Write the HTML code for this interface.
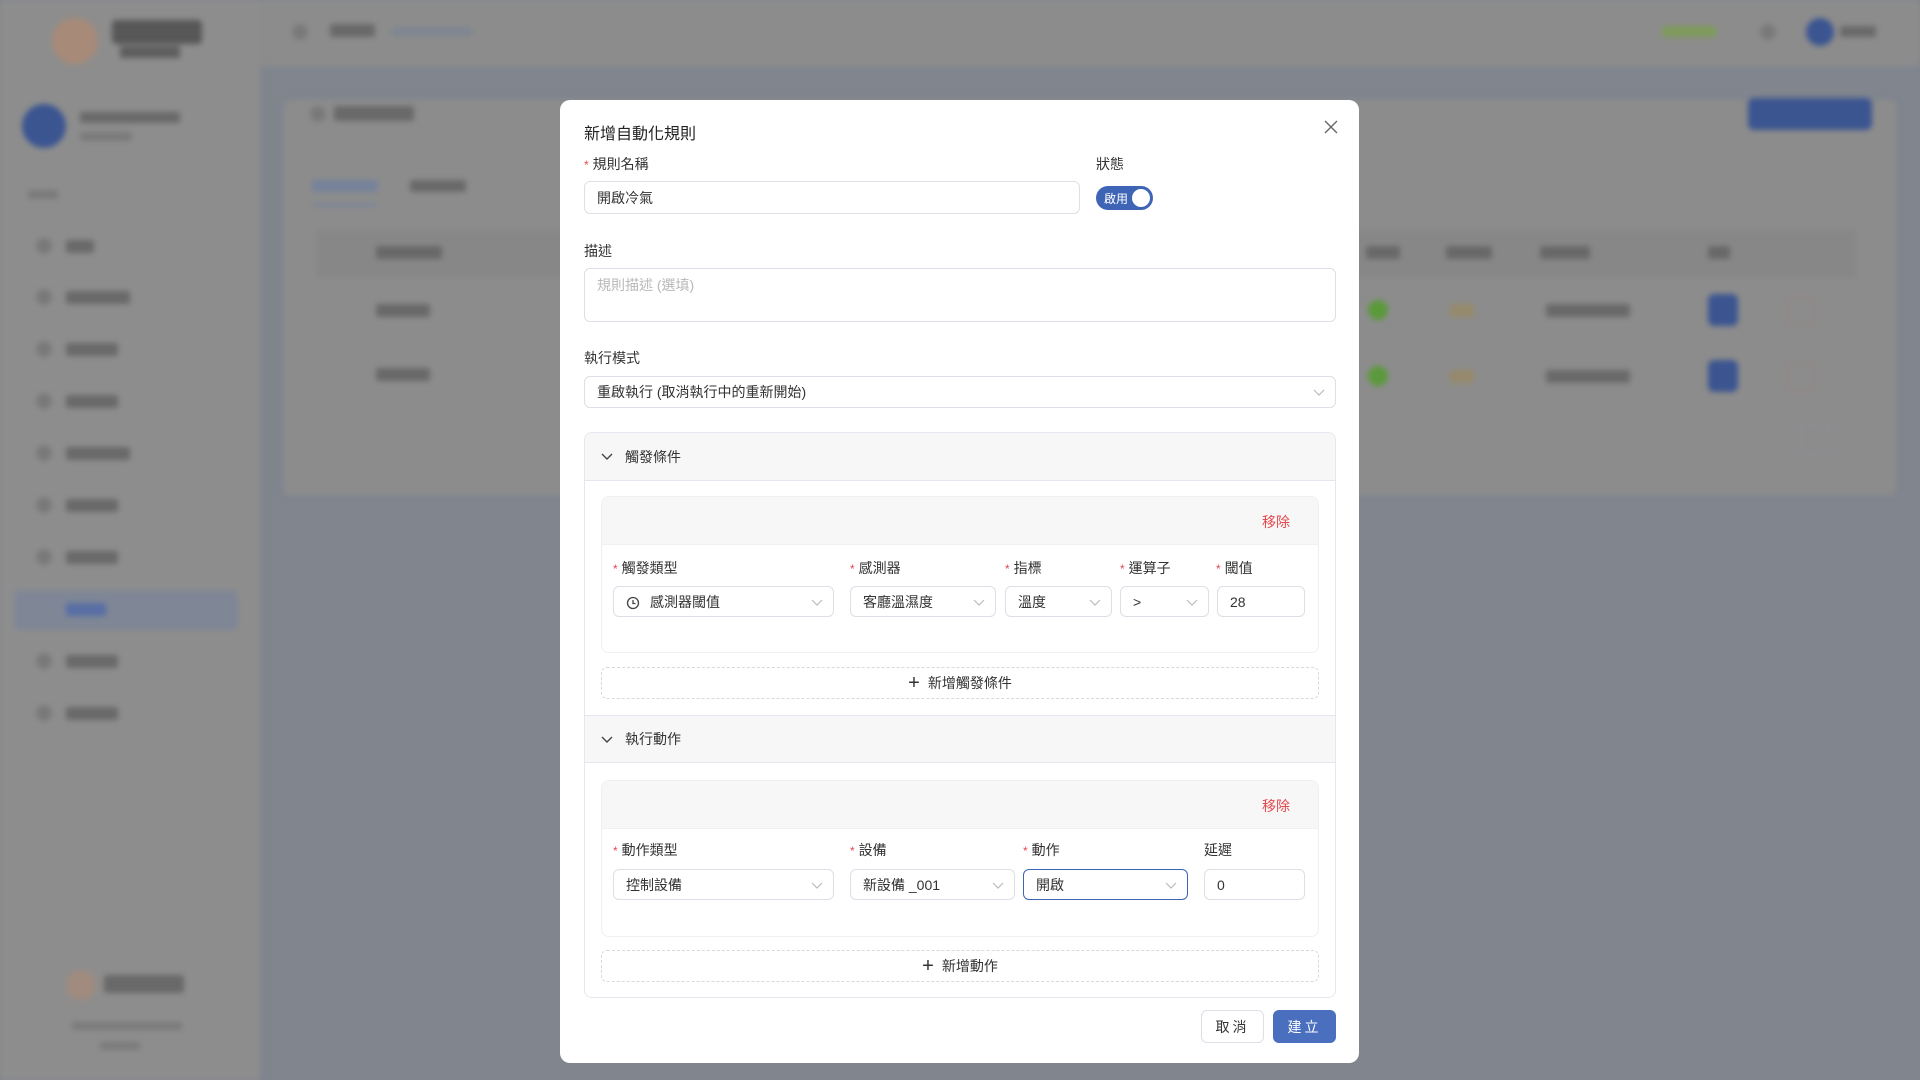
<!DOCTYPE html>
<html><head><meta charset="utf-8"><style>
*{box-sizing:border-box;margin:0;padding:0}
body{width:1920px;height:1080px;overflow:hidden;position:relative;font-family:"Liberation Sans","Noto Sans CJK TC",sans-serif;background:#80858e;color:#333}
.bg{position:absolute;inset:0;filter:blur(3px)}
.a{position:absolute}
.t{position:absolute;height:13px;background:#5e5e5e;opacity:.75;border-radius:2px}
.ic{position:absolute;width:16px;height:16px;border-radius:50%;background:#707070;opacity:.7}
.m{position:absolute;left:560px;top:100px;width:799px;height:963px;background:#fff;border-radius:10px}
.lbl{position:absolute;font-size:14px;color:#333}
.lbl i{color:#e5484d;font-style:normal;margin-right:4px;font-size:12px}
.in{position:absolute;border:1px solid #dcdfe6;border-radius:6px;background:#fff;font-size:14px;color:#333;display:flex;align-items:center;padding-left:12px}
.chev{position:absolute;right:10px;top:50%;margin-top:-5px;width:12px;height:10px}
.panel{position:absolute;left:584px;width:752px;border:1px solid #e4e7ed;border-radius:8px;background:#fff}
.ph{position:absolute;left:0;right:0;height:48px;background:#f7f7f7;border-bottom:1px solid #e4e7ed;font-size:14px;display:flex;align-items:center;padding-left:40px}
.card{position:absolute;left:601px;width:718px;border:1px solid #eef0f3;border-radius:8px;background:#fff;overflow:hidden}
.card .hd{height:48px;background:#f7f7f8;border-bottom:1px solid #eef0f3;position:relative}
.rm{position:absolute;right:28px;top:15px;color:#e5484d;font-size:14px}
.add{position:absolute;left:601px;width:718px;height:32px;border:1px dashed #d6d9de;border-radius:6px;display:flex;align-items:center;justify-content:center;font-size:14px;color:#333}
</style></head><body>
<div class="bg">
 <div class="a" style="left:0;top:0;width:260px;height:1080px;background:#8d8d8d"></div>
 <div class="a" style="left:260px;top:0;width:1660px;height:66px;background:#8c8c8c"></div>
 <div class="a" style="left:52px;top:18px;width:46px;height:46px;border-radius:50%;background:#a88a78"></div>
 <div class="a" style="left:112px;top:20px;width:90px;height:24px;background:#404040;border-radius:4px;opacity:.7"></div>
 <div class="a" style="left:120px;top:46px;width:60px;height:12px;background:#404040;opacity:.6"></div>
 <div class="a" style="left:22px;top:104px;width:44px;height:44px;border-radius:50%;background:#3b5591"></div>
 <div class="t" style="left:80px;top:112px;width:100px;height:11px"></div>
 <div class="t" style="left:80px;top:132px;width:52px;height:9px;opacity:.4"></div>
 <div class="t" style="left:28px;top:190px;width:30px;height:9px;opacity:.4"></div>
 <div class="a" style="left:14px;top:590px;width:224px;height:40px;background:#7f8696;border-radius:6px"></div>
 <div class="ic" style="left:36px;top:238px"></div><div class="t" style="left:66px;top:240px;width:28px"></div>
 <div class="ic" style="left:36px;top:289px"></div><div class="t" style="left:66px;top:291px;width:64px"></div>
 <div class="ic" style="left:36px;top:341px"></div><div class="t" style="left:66px;top:343px;width:52px"></div>
 <div class="ic" style="left:36px;top:393px"></div><div class="t" style="left:66px;top:395px;width:52px"></div>
 <div class="ic" style="left:36px;top:445px"></div><div class="t" style="left:66px;top:447px;width:64px"></div>
 <div class="ic" style="left:36px;top:497px"></div><div class="t" style="left:66px;top:499px;width:52px"></div>
 <div class="ic" style="left:36px;top:549px"></div><div class="t" style="left:66px;top:551px;width:52px"></div>
 <div class="t" style="left:66px;top:603px;width:40px;background:#4a66a8"></div>
 <div class="ic" style="left:36px;top:653px"></div><div class="t" style="left:66px;top:655px;width:52px"></div>
 <div class="ic" style="left:36px;top:705px"></div><div class="t" style="left:66px;top:707px;width:52px"></div>
 <div class="a" style="left:66px;top:970px;width:30px;height:30px;border-radius:50%;background:#a88a78;opacity:.7"></div>
 <div class="t" style="left:104px;top:975px;width:80px;height:18px"></div>
 <div class="t" style="left:72px;top:1022px;width:110px;height:8px;opacity:.4"></div>
 <div class="t" style="left:100px;top:1042px;width:40px;height:8px;opacity:.4"></div>
 <div class="ic" style="left:292px;top:24px"></div>
 <div class="t" style="left:330px;top:24px;width:45px"></div>
 <div class="t" style="left:392px;top:27px;width:80px;height:9px;background:#7a8494"></div>
 <div class="t" style="left:1662px;top:26px;width:54px;height:11px;background:#7aa04a"></div>
 <div class="ic" style="left:1760px;top:24px"></div>
 <div class="a" style="left:1806px;top:18px;width:28px;height:28px;border-radius:50%;background:#3b5591"></div>
 <div class="t" style="left:1840px;top:26px;width:36px;height:11px"></div>
 <div class="a" style="left:284px;top:100px;width:1612px;height:395px;background:#8c8c8c;border-radius:6px"></div>
 <div class="ic" style="left:310px;top:106px"></div><div class="t" style="left:334px;top:106px;width:80px;height:15px"></div>
 <div class="t" style="left:312px;top:180px;width:66px;height:12px;background:#6f7fa0"></div>
 <div class="a" style="left:312px;top:204px;width:66px;height:2px;background:#6f7fa0"></div>
 <div class="t" style="left:410px;top:180px;width:56px;height:12px"></div>
 <div class="a" style="left:316px;top:230px;width:1540px;height:48px;background:#878787"></div>
 <div class="t" style="left:376px;top:246px;width:66px;height:13px"></div>
 <div class="t" style="left:1366px;top:246px;width:34px"></div>
 <div class="t" style="left:1446px;top:246px;width:46px"></div>
 <div class="t" style="left:1540px;top:246px;width:50px"></div>
 <div class="t" style="left:1708px;top:246px;width:22px"></div>
 <div class="t" style="left:376px;top:304px;width:54px"></div>
 <div class="t" style="left:376px;top:368px;width:54px"></div>
 <div class="a" style="left:1368px;top:300px;width:20px;height:20px;border-radius:50%;background:#5a9a3a"></div>
 <div class="a" style="left:1368px;top:366px;width:20px;height:20px;border-radius:50%;background:#5a9a3a"></div>
 <div class="t" style="left:1450px;top:304px;width:24px;background:#9a8a60"></div>
 <div class="t" style="left:1450px;top:370px;width:24px;background:#9a8a60"></div>
 <div class="t" style="left:1546px;top:304px;width:84px"></div>
 <div class="t" style="left:1546px;top:370px;width:84px"></div>
 <div class="a" style="left:1708px;top:294px;width:30px;height:32px;border-radius:6px;background:#3b5591"></div>
 <div class="a" style="left:1708px;top:360px;width:30px;height:32px;border-radius:6px;background:#3b5591"></div>
 <div class="a" style="left:1788px;top:296px;width:28px;height:30px;border-radius:6px;border:1px solid #a08080"></div>
 <div class="a" style="left:1788px;top:362px;width:28px;height:30px;border-radius:6px;border:1px solid #a08080"></div>
 <div class="a" style="left:1800px;top:424px;width:30px;height:32px;border-radius:6px;border:1px solid #8a90a0"></div>
 <div class="a" style="left:1748px;top:98px;width:124px;height:32px;background:#3b5591;border-radius:6px"></div>
</div>

<div class="m"></div>
<div class="a" style="left:584px;top:120px;font-size:16px;color:#222">新增自動化規則</div>
<svg class="a" style="left:1324px;top:120px" width="14" height="14" viewBox="0 0 14 14"><path d="M1 1L13 13M13 1L1 13" stroke="#666" stroke-width="1.4"/></svg>

<div class="lbl" style="left:584px;top:154px"><i>*</i>規則名稱</div>
<div class="in" style="left:584px;top:181px;width:496px;height:33px">開啟冷氣</div>
<div class="lbl" style="left:1096px;top:154px">狀態</div>
<div class="a" style="left:1096px;top:186px;width:57px;height:24px;border-radius:12px;background:#3e64b5;color:#fff;font-size:12px;padding:4px 0 0 8px">啟用<div class="a" style="right:3px;top:3px;width:18px;height:18px;border-radius:50%;background:#fff"></div></div>

<div class="lbl" style="left:584px;top:241px">描述</div>
<div class="in" style="left:584px;top:268px;width:752px;height:54px;align-items:flex-start;padding-top:6px;color:#b8b8b8">規則描述 (選填)</div>

<div class="lbl" style="left:584px;top:348px">執行模式</div>
<div class="in" style="left:584px;top:376px;width:752px;height:32px">重啟執行 (取消執行中的重新開始)<svg class="chev" viewBox="0 0 12 10"><path d="M1 3L6 8L11 3" fill="none" stroke="#bbb" stroke-width="1.2"/></svg></div>

<div class="panel" style="top:432px;height:566px"></div>
<div class="ph" style="left:585px;right:auto;width:750px;top:433px;border-radius:8px 8px 0 0"><svg class="a" style="left:16px;top:20px" width="12" height="8" viewBox="0 0 12 8"><path d="M1 1L6 6L11 1" fill="none" stroke="#444" stroke-width="1.4"/></svg>觸發條件</div>
<div class="card" style="top:496px;height:157px"><div class="hd"><span class="rm">移除</span></div></div>
<div class="lbl" style="left:613px;top:558px"><i>*</i>觸發類型</div>
<div class="lbl" style="left:850px;top:558px"><i>*</i>感測器</div>
<div class="lbl" style="left:1005px;top:558px"><i>*</i>指標</div>
<div class="lbl" style="left:1120px;top:558px"><i>*</i>運算子</div>
<div class="lbl" style="left:1216px;top:558px"><i>*</i>閾值</div>
<div class="in" style="left:613px;top:586px;width:221px;height:31px;padding-left:36px"><svg class="a" style="left:12px;top:9px" width="14" height="14" viewBox="0 0 14 14"><circle cx="7" cy="7" r="5.5" fill="none" stroke="#444" stroke-width="1.3"/><path d="M7 4V7.5H9.5" fill="none" stroke="#444" stroke-width="1.3"/></svg>感測器閾值<svg class="chev" viewBox="0 0 12 10"><path d="M1 3L6 8L11 3" fill="none" stroke="#bbb" stroke-width="1.2"/></svg></div>
<div class="in" style="left:850px;top:586px;width:146px;height:31px">客廳溫濕度<svg class="chev" viewBox="0 0 12 10"><path d="M1 3L6 8L11 3" fill="none" stroke="#bbb" stroke-width="1.2"/></svg></div>
<div class="in" style="left:1005px;top:586px;width:107px;height:31px">溫度<svg class="chev" viewBox="0 0 12 10"><path d="M1 3L6 8L11 3" fill="none" stroke="#bbb" stroke-width="1.2"/></svg></div>
<div class="in" style="left:1120px;top:586px;width:89px;height:31px">&gt;<svg class="chev" viewBox="0 0 12 10"><path d="M1 3L6 8L11 3" fill="none" stroke="#bbb" stroke-width="1.2"/></svg></div>
<div class="in" style="left:1217px;top:586px;width:88px;height:31px">28</div>
<div class="add" style="top:667px"><span style="font-size:20px;margin-right:8px;line-height:1">+</span>新增觸發條件</div>

<div class="ph" style="left:585px;right:auto;width:750px;top:715px;border-top:1px solid #e4e7ed"><svg class="a" style="left:16px;top:20px" width="12" height="8" viewBox="0 0 12 8"><path d="M1 1L6 6L11 1" fill="none" stroke="#444" stroke-width="1.4"/></svg>執行動作</div>
<div class="card" style="top:780px;height:157px"><div class="hd"><span class="rm">移除</span></div></div>
<div class="lbl" style="left:613px;top:840px"><i>*</i>動作類型</div>
<div class="lbl" style="left:850px;top:840px"><i>*</i>設備</div>
<div class="lbl" style="left:1023px;top:840px"><i>*</i>動作</div>
<div class="lbl" style="left:1204px;top:840px">延遲</div>
<div class="in" style="left:613px;top:869px;width:221px;height:31px">控制設備<svg class="chev" viewBox="0 0 12 10"><path d="M1 3L6 8L11 3" fill="none" stroke="#bbb" stroke-width="1.2"/></svg></div>
<div class="in" style="left:850px;top:869px;width:165px;height:31px">新設備 _001<svg class="chev" viewBox="0 0 12 10"><path d="M1 3L6 8L11 3" fill="none" stroke="#bbb" stroke-width="1.2"/></svg></div>
<div class="in" style="left:1023px;top:869px;width:165px;height:31px;border-color:#3e64b5">開啟<svg class="chev" viewBox="0 0 12 10"><path d="M1 3L6 8L11 3" fill="none" stroke="#bbb" stroke-width="1.2"/></svg></div>
<div class="in" style="left:1204px;top:869px;width:101px;height:31px">0</div>
<div class="add" style="top:950px"><span style="font-size:20px;margin-right:8px;line-height:1">+</span>新增動作</div>

<div class="a" style="left:1201px;top:1010px;width:63px;height:33px;border:1px solid #dcdfe6;border-radius:6px;font-size:14px;display:flex;align-items:center;justify-content:center;letter-spacing:3px">取消</div>
<div class="a" style="left:1273px;top:1010px;width:63px;height:33px;background:#4a6fbf;color:#fff;border-radius:6px;font-size:14px;display:flex;align-items:center;justify-content:center;letter-spacing:3px">建立</div>
</body></html>
